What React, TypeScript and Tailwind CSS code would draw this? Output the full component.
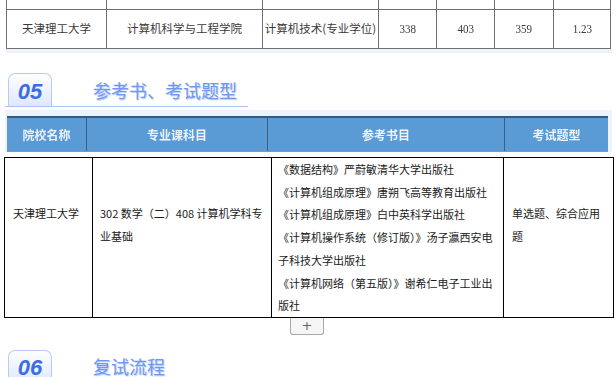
import React from 'react';

const cjk = "font-['Noto_Sans_CJK_SC','Noto_Sans',sans-serif]";

const topCells = [
  { text: '天津理工大学', num: false },
  { text: '计算机科学与工程学院', num: false },
  { text: '计算机技术(专业学位)', num: false },
  { text: '338', num: true },
  { text: '403', num: true },
  { text: '359', num: true },
  { text: '1.23', num: true },
];

const books = [
  '《数据结构》严蔚敏清华大学出版社',
  '《计算机组成原理》唐朔飞高等教育出版社',
  '《计算机组成原理》白中英科学出版社',
  '《计算机操作系统（修订版）》汤子瀛西安电子科技大学出版社',
  '《计算机网络（第五版）》谢希仁电子工业出版社',
];

const SectionTitle = ({ no, title, line }: { no: string; title: string; line?: boolean }) => (
  <div
    className={`ml-[5px] flex h-[34px] w-[243px] items-end ${line ? 'border-b border-[#aac4f4]' : ''}`}
  >
    <div className="ml-[3px] flex h-[33px] w-[44px] items-center justify-center rounded-t-[7px] border border-b-0 border-[#b7cbf6] bg-gradient-to-b from-white to-[#dde7fd] pt-[2px]">
      <span className="font-['Liberation_Sans',sans-serif] text-[22px] font-bold italic text-[#3d6de2]">{no}</span>
    </div>
    <span
      className={`${cjk} ml-[41px] self-center text-[18px] leading-[24px] text-[#6f98ee] [text-shadow:1px_1px_1px_#b5cbf7]`}
    >
      {title}
    </span>
  </div>
);

export default function App() {
  return (
    <div className="relative h-[377px] w-[616px] overflow-hidden bg-white">
      {/* previous table (screenshot) */}
      <div className="ml-[6px] grid w-[605px] grid-cols-[100px_156px_116px_58px_58px_59px_58px]">
        {topCells.map((c, i) => (
          <div key={i} className={`h-[49px] border-l border-[#6f6f6f] ${i === 6 ? 'border-r' : ''}`}>
            <div className="mt-[9px] flex h-[40px] items-center justify-center border-y border-[#6f6f6f]">
              <span
                className={
                  c.num
                    ? "font-['Liberation_Serif',serif] text-[13px] text-[#3a3a3a] [transform:scaleX(0.85)]"
                    : `${cjk} text-[11.5px] text-[#3a3a3a]`
                }
              >
                {c.text}
              </span>
            </div>
          </div>
        ))}
      </div>
      <div className="ml-[6px] h-[4px] w-[606px] bg-[#eef2f9]" />

      <div className="mt-[20px]">
        <SectionTitle no="05" title="参考书、考试题型" line />
      </div>

      {/* header band (screenshot) */}
      <div className="ml-[5px] mt-[3px] w-[607px] bg-[#eef3fb] px-[2px] pt-[6px]">
        <div className="grid h-[36px] w-[601px] grid-cols-[80px_181px_237px_103px] border-t-2 border-b border-t-[#3b5878] border-b-[#8797a8] bg-[#5b9bd5]">
          {['院校名称', '专业课科目', '参考书目', '考试题型'].map((h, i) => (
            <div
              key={h}
              className={`flex items-center justify-center ${i < 3 ? 'border-r border-[#3e5e80]' : ''}`}
            >
              <span className={`${cjk} text-[12px] font-bold text-[#eaf2fc] blur-[0.4px]`}>{h}</span>
            </div>
          ))}
        </div>
      </div>

      {/* main table */}
      <table className={`${cjk} ml-[4px] mt-[5px] w-[609px] table-fixed border-collapse text-[11px] text-[#1a1a1a]`}>
        <colgroup>
          <col className="w-[88px]" />
          <col className="w-[179px]" />
          <col className="w-[232px]" />
          <col className="w-[110px]" />
        </colgroup>
        <tbody>
          <tr>
            <td className="border border-black pl-[8px] pt-[44px] align-top leading-[23px]">天津理工大学</td>
            <td className="border border-black pl-[7px] pr-[6px] pt-[44px] align-top leading-[23px]">
              302 数学（二）408 计算机学科专业基础
            </td>
            <td className="border border-black pl-[6px] pr-[4px] align-top leading-[22.7px]">
              {books.map((b) => (
                <p key={b}>{b}</p>
              ))}
            </td>
            <td className="border border-black pl-[8px] pr-[6px] pt-[44px] align-top leading-[23px]">
              单选题、综合应用题
            </td>
          </tr>
        </tbody>
      </table>

      <div className="ml-[290px] flex h-[17px] w-[34px] items-center justify-center rounded-b-[3px] border border-t-0 border-[#a9a9a9] bg-[#f6f6f6] font-['DejaVu_Sans',sans-serif] text-[13px] text-[#666]">
        +
      </div>

      <div className="mt-[14px]">
        <SectionTitle no="06" title="复试流程" />
      </div>
    </div>
  );
}
